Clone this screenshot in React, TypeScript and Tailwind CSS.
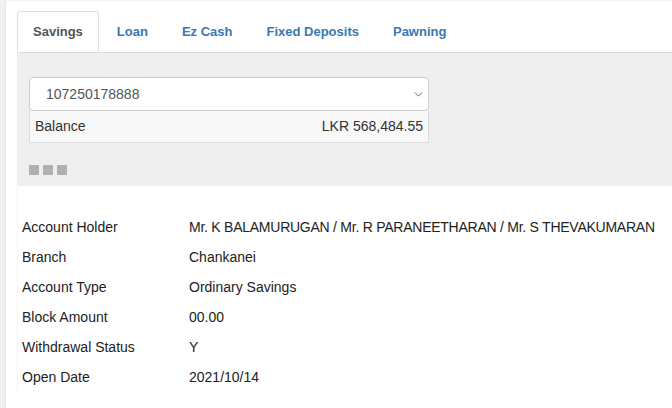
import { ChevronDown } from 'lucide-react';

const tabs = ['Savings', 'Loan', 'Ez Cash', 'Fixed Deposits', 'Pawning'];

const details = [
  ['Account Holder', 'Mr. K BALAMURUGAN / Mr. R PARANEETHARAN / Mr. S THEVAKUMARAN'],
  ['Branch', 'Chankanei'],
  ['Account Type', 'Ordinary Savings'],
  ['Block Amount', '00.00'],
  ['Withdrawal Status', 'Y'],
  ['Open Date', '2021/10/14'],
];

export default function App() {
  return (
    <div className="w-[672px] h-[408px] overflow-hidden bg-[#f1f1f1] flex font-['Liberation_Sans',Arial,sans-serif]">
      <div className="w-[6px] shrink-0 border-r border-[#e6e6e6]" />
      <main className="flex-1 mt-[1px] bg-white pl-[11px]">
        {/* Tabs */}
        <nav className="flex pt-[10px] border-b border-[#dddddd]">
          {tabs.map((t, i) => (
            <div
              key={t}
              className={
                i === 0
                  ? 'h-[41px] px-[15px] mr-[2px] -mb-px flex items-center text-[13px] font-bold text-[#555555] bg-white border border-[#dddddd] border-b-white rounded-t-[4px]'
                  : 'h-[41px] px-[15px] mr-[2px] flex items-center text-[13px] font-bold text-[#3a78b2] border border-transparent'
              }
            >
              {t}
            </div>
          ))}
        </nav>

        {/* Account selector panel */}
        <section className="bg-[#efefef] pl-[12px] pt-[24px] pb-[11px]">
          <div className="w-[400px]">
            <div className="h-[34px] bg-white border border-[#cccccc] rounded-[4px] flex items-center justify-between pl-[16px] pr-[3px] text-[14px] text-[#555555]">
              <span>107250178888</span>
              <ChevronDown className="w-[13px] h-[13px] text-[#555555]" strokeWidth={1.75} />
            </div>
            <div className="h-[32px] bg-[#f8f8f8] border border-[#dddddd] border-t-0 flex items-center justify-between px-[5px] text-[14px] text-[#333333]">
              <span>Balance</span>
              <span>LKR 568,484.55</span>
            </div>
          </div>
          <div className="flex gap-[4px] mt-[22px]">
            <span className="w-[10px] h-[10px] bg-[#b0b0b0]" />
            <span className="w-[10px] h-[10px] bg-[#b0b0b0]" />
            <span className="w-[10px] h-[10px] bg-[#b0b0b0]" />
          </div>
        </section>

        {/* Account details */}
        <section className="pt-[26px] pl-[4px] border-l border-[#f6f6f6]">
          {details.map(([label, value], i) => (
            <div key={label} className="h-[30px] flex items-center text-[14px] text-[#222222]">
              <span className="w-[167px] shrink-0">{label}</span>
              <span className={i === 0 ? 'whitespace-nowrap tracking-[-0.25px]' : 'whitespace-nowrap'}>{value}</span>
            </div>
          ))}
        </section>
      </main>
    </div>
  );
}
